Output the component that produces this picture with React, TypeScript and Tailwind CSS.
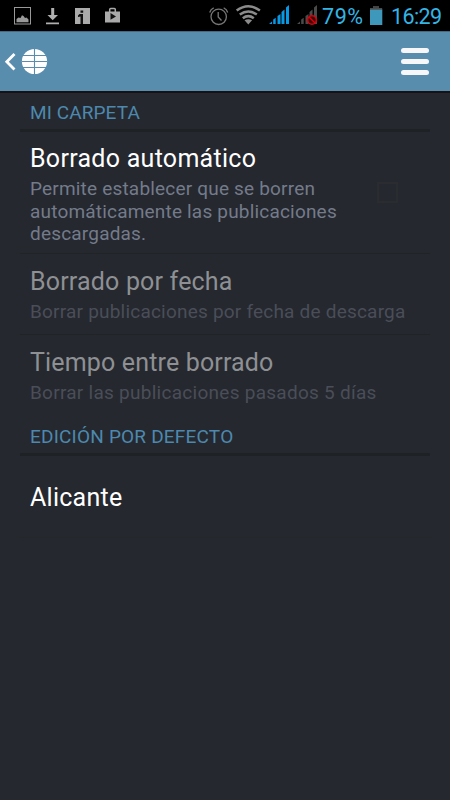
import type { ReactNode } from 'react';

function StatusBar() {
  return (
    <div className="flex h-[31px] shrink-0 bg-black">
      <svg width="450" height="31" viewBox="0 0 450 31">
        <rect x="14.5" y="7.5" width="16" height="16.5" fill="none" stroke="#999" />
        <path d="M16.500 22.300V19l2-1.500 2 .5 1.500-2.700 1.500.8 1.500 1.900 1.500-.5 2 2v2.800z" fill="#999" />
        <path d="M51.200 8h3v7H58l-5.300 5.300L47.500 15h3.700zM46 22.500h13V24.300H46z" fill="#b0b0b0" />
        <rect x="75" y="8" width="15" height="16" fill="#ababab" />
        <path d="M80.500 10.500h2.700v2.300h-2.700zM78 15.500l1.500-1.500H83v10h-2.500v-7.500l-2.500.5z" fill="#111" />
        <path d="M105 11.500h15v11h-15z" fill="#aaa" />
        <path d="M109.700 12V9.500q0-1 1-1h3.600q1 0 1 1V12" fill="none" stroke="#aaa" strokeWidth="1.500" />
        <path d="M110.500 13l5.500 3.500-5.500 3.300z" fill="#111" />
        <g fill="none" stroke="#777" strokeWidth="1.300">
          <circle cx="218.700" cy="16.800" r="7.700" />
          <path d="M218.200 12v5l3.300 3.500M209.700 12.500q1-3.500 4-4.700M227.700 12.500q-1-3.500-4-4.700" />
        </g>
        <g fill="none" stroke="#8b8b8b" strokeWidth="2.600">
          <path d="M236.700 10.500q11.600-8.500 23.200 0M239.800 14.500q8.500-6 17 0M242.800 18.200q5.500-4 11 0" />
          <path d="M244.500 20.200q3.800-2 7.600 0l-3.800 4.300z" fill="#8b8b8b" stroke="none" />
        </g>
        <path d="M269 24l3-2.500V24zM273.200 24v-4.500l2.500-1.800V24zM277.500 24v-8l3-2v10zM281.500 24V12l3-2.500V24zM286 24V7.500l3-2.500v19z" fill="#0799e6" />
        <path d="M297 24l3-2.500V24zM301.200 24v-4.500l2.500-1.800V24zM305.500 24v-8l3-2v10zM309.500 24V12l3-2.500V24zM314 24V7.500l3-2.500v19z" fill="#4a4a4a" />
        <circle cx="312" cy="20" r="4.300" fill="#300" stroke="#d8000c" strokeWidth="1.600" />
        <path d="M309 17l6 6" stroke="#d8000c" strokeWidth="1.600" />
        <text x="322" y="24" fill="#33b5e5" fontFamily="Roboto, sans-serif" fontSize="21.500" textLength="41" lengthAdjust="spacing">79%</text>
        <path d="M373 6h6v2h3v3h-12V8h3z" fill="#444" />
        <rect x="370" y="9.500" width="12.300" height="15.500" fill="#3d98bb" />
        <path d="M370 9h12.300" stroke="#555" />
        <text x="391" y="24" fill="#33b5e5" fontFamily="Roboto, sans-serif" fontSize="21.500" textLength="51" lengthAdjust="spacing">16:29</text>
      </svg>
    </div>
  );
}

function ActionBar() {
  return (
    <header className="flex h-[62px] shrink-0 items-center justify-between border-t border-b-2 border-t-[#426b83] border-b-[#171314] bg-[#588dae] pr-[21px] pl-[4px]">
      <svg width="45" height="30" viewBox="0 0 45 30">
        <path d="M9.500 8L2.800 14.700L9.500 21.500" fill="none" stroke="#fff" strokeWidth="2.800" strokeLinecap="square" />
        <circle cx="30.500" cy="14.500" r="12.600" fill="#fff" />
        <path d="M30.500 2v25M18 14.500h25M18 8.500h25M18 20.500h25" stroke="#588dae" strokeWidth="1.100" />
      </svg>
      <div className="flex flex-col gap-[6px]">
        <span className="h-[5px] w-7 rounded-full bg-[#f7f7fa]" />
        <span className="h-[5px] w-7 rounded-full bg-[#f7f7fa]" />
        <span className="h-[5px] w-7 rounded-full bg-[#f7f7fa]" />
      </div>
    </header>
  );
}

function Section({ children, className }: { children: ReactNode; className: string }) {
  return (
    <h2 className={`flex h-[39px] items-start border-b-[3px] border-[#1f2225] pt-[9px] pl-[10px] text-[19px] leading-[22px] text-[#4d89ae] ${className}`}>
      {children}
    </h2>
  );
}

function Title({ children, className }: { children: ReactNode; className: string }) {
  return <h3 className={`text-[25px] leading-[30px] whitespace-nowrap ${className}`}>{children}</h3>;
}

export default function App() {
  return (
    <div className="flex h-[800px] w-[450px] flex-col overflow-hidden bg-[#25282f] font-['Roboto','Liberation_Sans',sans-serif]">
      <StatusBar />
      <ActionBar />
      <main className="mx-5 flex flex-col">
        <Section className="tracking-[0.1px]">MI CARPETA</Section>
        <div className="flex h-[122px] justify-between border-b border-[#212427] pt-[12px] pr-[32px] pl-[10px]">
          <div>
            <Title className="tracking-[0.28px] text-white">Borrado automático</Title>
            <p className="mt-[4px] text-[19px] leading-[22.5px] tracking-[0.19px] whitespace-nowrap text-[#747b8a]">
              Permite establecer que se borren
              <br />
              automáticamente las publicaciones
              <br />
              descargadas.
            </p>
          </div>
          <span className="mt-[38px] size-[21px] border-2 border-[#2b2c30]" />
        </div>
        <div className="h-[81px] border-b border-[#212427] pt-[13px] pl-[10px]">
          <Title className="tracking-[0.18px] text-[#8e9093]">Borrado por fecha</Title>
          <p className="mt-[4px] text-[19px] leading-[22.5px] tracking-[0.21px] whitespace-nowrap text-[#4a4e58]">Borrar publicaciones por fecha de descarga</p>
        </div>
        <div className="h-[82px] pt-[13px] pl-[10px]">
          <Title className="tracking-[0.16px] text-[#8e9093]">Tiempo entre borrado</Title>
          <p className="mt-[4px] text-[19px] leading-[22.5px] tracking-[0.27px] whitespace-nowrap text-[#4a4e58]">Borrar las publicaciones pasados 5 días</p>
        </div>
        <Section className="tracking-[0.2px]">EDICIÓN POR DEFECTO</Section>
        <div className="h-[82px] border-b border-[#25282b] pt-[27px] pl-[10px]">
          <Title className="tracking-[0.25px] text-white">Alicante</Title>
        </div>
      </main>
    </div>
  );
}
